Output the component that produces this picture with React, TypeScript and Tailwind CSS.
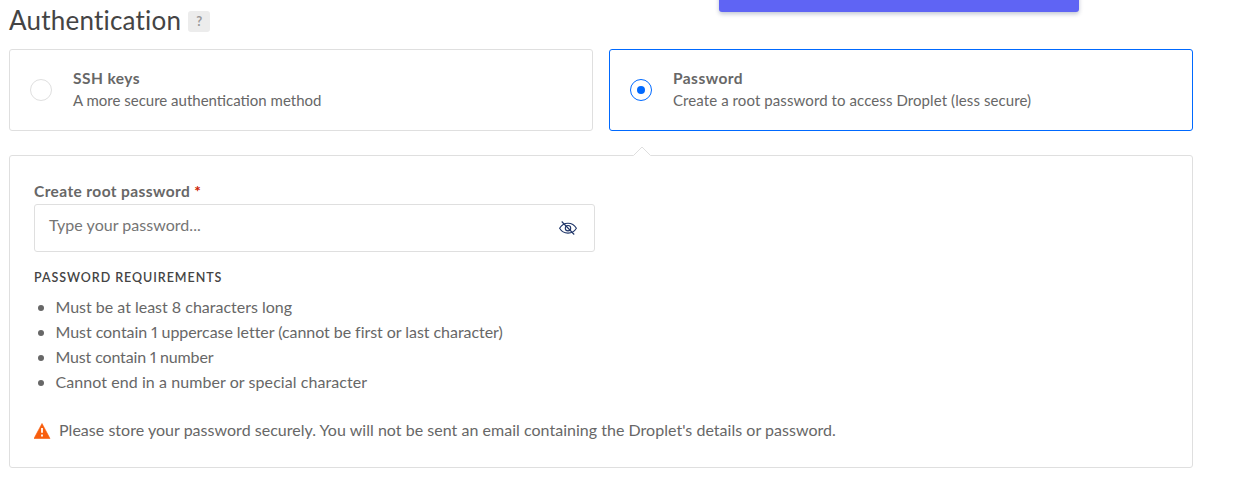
import React from "react";

type MethodProps = {
  title: string;
  description: string;
  selected?: boolean;
  spacing: string;
};

function Method({ title, description, selected = false, spacing }: MethodProps) {
  return (
    <div
      role="radio"
      aria-checked={selected}
      className={
        selected
          ? "flex h-[82px] flex-1 items-center gap-[21px] rounded-[3px] border border-[#0069ff] pl-5"
          : "flex h-[82px] flex-1 items-center gap-[21px] rounded-[3px] border border-[#dfdfdf] pl-5"
      }
    >
      <span
        className={
          selected
            ? "flex size-[22px] items-center justify-center rounded-full border border-[#0069ff]"
            : "flex size-[22px] items-center justify-center rounded-full border border-[#dfdfdf]"
        }
      >
        {selected && <span className="size-2 rounded-full bg-[#0069ff]" />}
      </span>
      <div className="pb-[2px] whitespace-nowrap">
        <div className="text-[15.5px] leading-[22px] font-bold tracking-[0.45px]">{title}</div>
        <div className={`text-[15px] leading-[22px] ${spacing}`}>{description}</div>
      </div>
    </div>
  );
}

const requirements = [
  { text: "Must be at least 8 characters long", spacing: "tracking-[-0.01px]" },
  { text: "Must contain 1 uppercase letter (cannot be first or last character)", spacing: "tracking-[-0.05px]" },
  { text: "Must contain 1 number", spacing: "tracking-[-0.15px]" },
  { text: "Cannot end in a number or special character", spacing: "tracking-[0.07px]" },
];

export default function App() {
  return (
    <main className="relative h-[479px] w-[1250px] overflow-hidden bg-white pr-[57px] pl-[9px] font-['Lato',sans-serif] text-[#676767]">
      <div className="absolute -top-5 left-[719px] h-8 w-[360px] rounded-[3px] bg-[#5f64f4] shadow-[0_2px_4px_rgba(3,27,78,0.25)]" />

      <header className="flex h-[49px] items-start gap-[7px]">
        <h1 className="text-[26px] leading-10 tracking-[0.22px] text-[#444]">Authentication</h1>
        <span className="mt-[11px] flex h-[21px] w-[22px] items-center justify-center rounded-[3px] bg-[#ececec] pt-px text-[13px] font-bold text-[#999]">
          ?
        </span>
      </header>

      <div role="radiogroup" className="flex gap-4">
        <Method title="SSH keys" description="A more secure authentication method" spacing="tracking-[0px]" />
        <Method
          selected
          title="Password"
          description="Create a root password to access Droplet (less secure)"
          spacing="tracking-[0.09px]"
        />
      </div>

      <section className="relative mt-6 h-[313px] rounded-[3px] border border-[#dfdfdf] px-6 pt-6">
        <svg className="absolute -top-[10px] left-[623px]" width="18" height="10" viewBox="0 0 18 10">
          <path d="M0 10 9 1l9 9Z" fill="#fff" />
          <path d="M0.5 9.5 9 1l8.500 8.500" fill="none" stroke="#dfdfdf" />
        </svg>

        <label className="block h-6 text-[15.5px] leading-[22px] font-bold tracking-[0.4px]">
          Create root password <span className="text-[#cc1b00]">*</span>
        </label>
        <div className="flex h-12 w-[561px] items-center justify-between rounded-[3px] border border-[#dfdfdf] pr-[17px] pl-[14px]">
          <span className="pb-[6px] text-base tracking-[0.03px] text-[#757575]">Type your password...</span>
          <svg width="18" height="14" viewBox="0 0 18 14" fill="none" stroke="#1f3568" strokeWidth="1.1">
            <path d="M0.600 7.300C2.500 4.100 5.400 2.300 9 2.300s6.500 1.800 8.400 5c-1.900 3.200-4.800 4.800-8.400 4.800S2.500 10.500.6 7.300Z" />
            <circle cx="9" cy="7.200" r="2.700" />
            <path d="M2.700 0.500 15.200 13.500" />
          </svg>
        </div>

        <h2 className="mt-[17px] text-[12.5px] leading-[18px] font-semibold tracking-[0.95px] text-[#444]">PASSWORD REQUIREMENTS</h2>
        <ul className="mt-[8px]">
          {requirements.map(({ text, spacing }) => (
            <li key={text} className={`flex h-[25px] items-center gap-3 pl-[3.5px] text-base proportional-nums ${spacing}`}>
              <span className="mt-px size-[6px] rounded-full bg-[#676767]" />
              <span className="pb-[2px]">{text}</span>
            </li>
          ))}
        </ul>

        <div className="mt-[23px] flex h-[25px] items-center gap-2 text-base tracking-[0.027px]">
          <svg width="17" height="16" viewBox="0 0 17 16">
            <path d="M8 0.500 16 15.500H0Z" fill="#f85e0e" stroke="#f85e0e" strokeWidth="0.600" strokeLinejoin="round" />
            <path d="M8 5v4.800M8 11.400v2" stroke="#fff" strokeWidth="1.800" />
          </svg>
          <span className="pb-[2px]">Please store your password securely. You will not be sent an email containing the Droplet's details or password.</span>
        </div>
      </section>
    </main>
  );
}
